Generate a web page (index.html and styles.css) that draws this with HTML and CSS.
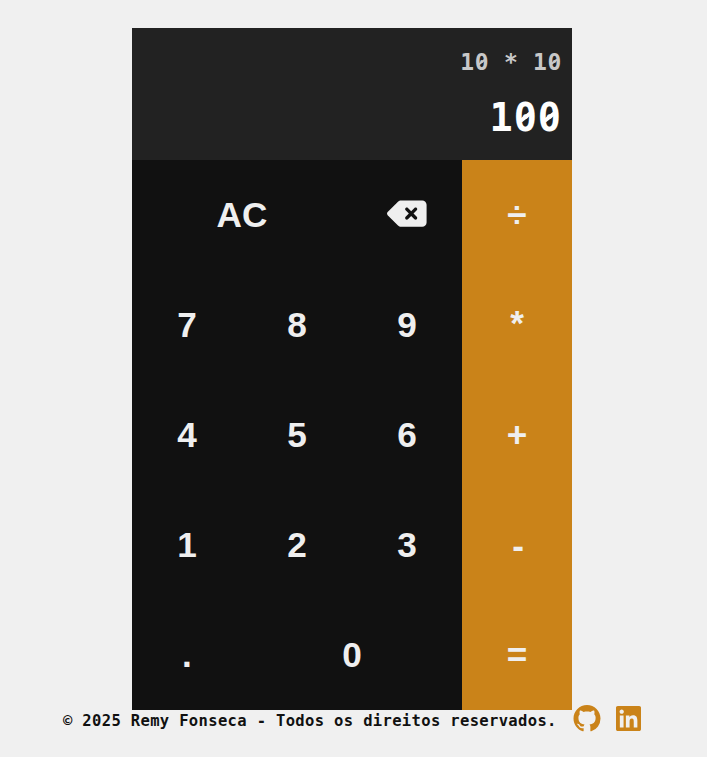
FILE: index.html
```html
<!DOCTYPE html>
<html lang="pt-BR">
<head>
<meta charset="utf-8">
<title>Calculadora</title>
<link rel="stylesheet" href="styles.css">
</head>
<body>
<main class="calculator">
  <div class="display">
    <div class="previous">1<span class="zero">0</span> * 1<span class="zero">0</span></div>
    <div class="current">1<span class="zero">0</span><span class="zero">0</span></div>
  </div>
  <div class="keys">
    <button class="key wide">AC</button>
    <button class="key" aria-label="Apagar"><svg class="delete" viewBox="0 0 576 512"><path d="M576 128c0-35.3-28.7-64-64-64H205.3c-17 0-33.3 6.7-45.3 18.7L9.4 233.4c-6 6-9.4 14.1-9.4 22.6s3.4 16.6 9.4 22.6L160 429.3c12 12 28.3 18.7 45.3 18.7H512c35.3 0 64-28.7 64-64V128zM271 175c9.4-9.4 24.6-9.4 33.9 0l47 47 47-47c9.4-9.4 24.6-9.4 33.9 0s9.4 24.6 0 33.9l-47 47 47 47c9.4 9.4 9.4 24.6 0 33.9s-24.6 9.4-33.9 0l-47-47-47 47c-9.4 9.4-24.6 9.4-33.9 0s-9.4-24.6 0-33.9l47-47-47-47c-9.4-9.4-9.4-24.6 0-33.9z"/></svg></button>
    <button class="key operator">÷</button>
    <button class="key">7</button>
    <button class="key">8</button>
    <button class="key">9</button>
    <button class="key operator times">*</button>
    <button class="key">4</button>
    <button class="key">5</button>
    <button class="key">6</button>
    <button class="key operator">+</button>
    <button class="key">1</button>
    <button class="key">2</button>
    <button class="key">3</button>
    <button class="key operator minus">-</button>
    <button class="key">.</button>
    <button class="key wide">0</button>
    <button class="key operator">=</button>
  </div>
</main>
<footer class="footer">
  <p class="copyright">© 2025 Remy Fonseca - Todos os direitos reservados.</p>
  <a class="social" aria-label="GitHub"><svg class="github" viewBox="0 0 16 16"><path d="M8 0C3.58 0 0 3.58 0 8c0 3.54 2.29 6.53 5.47 7.59.4.07.55-.17.55-.38 0-.19-.01-.82-.01-1.49-2.01.37-2.53-.49-2.69-.94-.09-.23-.48-.94-.82-1.13-.28-.15-.68-.52-.01-.53.63-.01 1.08.58 1.23.82.72 1.21 1.87.87 2.33.66.07-.52.28-.87.51-1.07-1.78-.2-3.64-.89-3.64-3.95 0-.87.31-1.59.82-2.15-.08-.2-.36-1.02.08-2.12 0 0 .67-.21 2.2.82.64-.18 1.32-.27 2-.27s1.36.09 2 .27c1.53-1.04 2.2-.82 2.2-.82.44 1.1.16 1.92.08 2.12.51.56.82 1.27.82 2.15 0 3.07-1.87 3.75-3.65 3.95.29.25.54.73.54 1.48 0 1.07-.01 1.93-.01 2.2 0 .21.15.46.55.38A8.01 8.01 0 0 0 16 8c0-4.42-3.58-8-8-8"/></svg></a>
  <a class="social" aria-label="LinkedIn"><svg class="linkedin" viewBox="0 32 448 448"><path d="M416 32H31.9C14.3 32 0 46.5 0 64.3v383.4C0 465.5 14.3 480 31.9 480H416c17.6 0 32-14.5 32-32.3V64.3c0-17.8-14.4-32.3-32-32.3zM135.4 416H69V202.2h66.5V416zm-33.2-243c-21.3 0-38.5-17.3-38.5-38.5S80.9 96 102.2 96c21.2 0 38.5 17.3 38.5 38.5 0 21.3-17.2 38.5-38.5 38.5zm282.1 243h-66.4V312c0-24.8-.5-56.7-34.5-56.7-34.6 0-39.9 27-39.9 54.9V416h-66.4V202.2h63.7v29.2h.9c8.9-16.8 30.6-34.5 62.2-34.5 66.5 0 78.9 43.8 78.9 100.9V416z"/></svg></a>
</footer>
</body>
</html>
```
FILE: styles.css
```css
* {
  box-sizing: border-box;
  margin: 0;
  padding: 0;
}

body {
  background: #f0f0f0;
  color: #111;
  font-family: Consolas, "DejaVu Sans Mono", monospace;
  font-weight: bold;
  padding-top: 28px;
}

.calculator {
  width: 440px;
  margin-left: 132px;
}

.display {
  display: flex;
  flex-direction: column;
  align-items: flex-end;
  height: 132px;
  padding: 18px 10px 0;
  background: #222;
}

.previous {
  color: #c8c8c8;
  font-size: 23px;
  letter-spacing: 0.67px;
  line-height: 32px;
}

.current {
  margin-top: 13px;
  color: #fff;
  font-size: 38.5px;
  letter-spacing: 1px;
  line-height: 54px;
}

/* Diagonal stroke through the display zeros */
.zero {
  position: relative;
}

.zero::after {
  content: "";
  position: absolute;
  left: 0.13em;
  top: 0.515em;
  width: 0.34em;
  height: 0.1em;
  background: currentColor;
  transform: rotate(-38deg);
}

.keys {
  display: grid;
  grid-template-columns: repeat(4, 110px);
  grid-auto-rows: 110px;
}

.key {
  display: flex;
  align-items: center;
  justify-content: center;
  border: 0;
  background: #111;
  color: #efefef;
  font: bold 35.2px/40px "Liberation Sans", Arial, sans-serif;
}

.wide {
  grid-column: span 2;
}

.operator {
  background: #ca8319;
}

.times {
  padding-bottom: 4px;
}

.minus {
  padding: 2px 0 0 2px;
}

.delete {
  width: 39.6px;
  height: 35.2px;
  margin-bottom: 2px;
  fill: currentColor;
}

.footer {
  display: flex;
  align-items: center;
  height: 27px;
  margin: -5px 0 0 63px;
}

.copyright {
  width: 510px;
  padding-top: 4px;
  font-size: 15.5px;
  letter-spacing: 0.35px;
  line-height: 20px;
  white-space: nowrap;
}

.social {
  display: flex;
  margin-right: 15px;
  fill: #ca8319;
}

.github {
  width: 28px;
  height: 27px;
}

.linkedin {
  width: 25px;
  height: 25px;
}
```
